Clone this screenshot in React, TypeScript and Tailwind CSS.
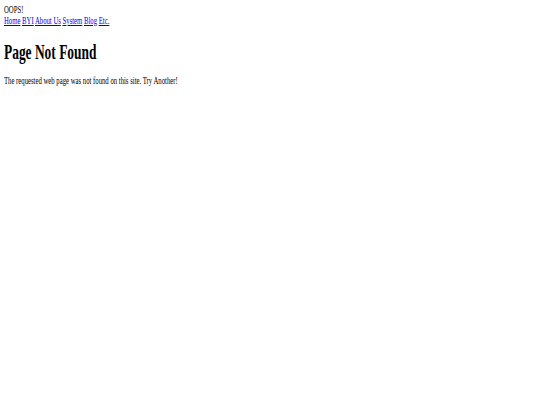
export default function App() {
  return (
    <div className="min-h-screen bg-white px-[4px] pt-[4px] text-black" style={{ fontFamily: '"Liberation Serif", serif' }}>
      <div className="origin-left scale-x-[0.61] text-[11px] leading-[11px]">
        <div>OOPS!</div>
        <div className="whitespace-nowrap">
          <a href="#" className="text-[#0000ee] underline">Home</a>{' '}
          <a href="#" className="text-[#0000ee] underline">BYI</a>{' '}
          <a href="#" className="text-[#0000ee] underline">About Us</a>{' '}
          <a href="#" className="text-[#0000ee] underline">System</a>{' '}
          <a href="#" className="text-[#0000ee] underline">Blog</a>{' '}
          <a href="#" className="text-[#0000ee] underline">Etc.</a>
        </div>
      </div>
      <h1 className="mt-[14px] origin-left scale-x-[0.61] whitespace-nowrap text-[22px] font-bold leading-[24px]">Page Not Found</h1>
      <p className="mt-[11px] origin-left scale-x-[0.61] whitespace-nowrap text-[11px] leading-[11px]">
        The requested web page was not found on this site. Try Another!
      </p>
    </div>
  )
}
